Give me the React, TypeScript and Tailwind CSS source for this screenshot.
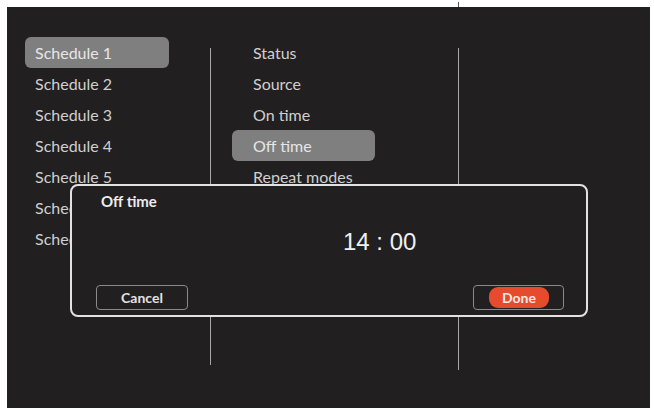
const SCHEDULES = ["Schedule 1", "Schedule 2", "Schedule 3", "Schedule 4", "Schedule 5", "Schedule 6", "Schedule 7"];
const SETTINGS = ["Status", "Source", "On time", "Off time", "Repeat modes"];

function MenuRow({ label, selected, width, padLeft }: { label: string; selected: boolean; width: string; padLeft: string }) {
  return (
    <div
      className={`${width} ${padLeft} h-[31px] flex items-center rounded-[6px] text-[16px] leading-none ${
        selected ? "bg-[#7f7f7f] text-[#e6e6e6]" : "text-[#cfcfcf]"
      }`}
    >
      {label}
    </div>
  );
}

export default function App() {
  return (
    <div className="relative w-[654px] h-[410px] bg-white pl-[7px] pt-[7px]" style={{ fontFamily: "Lato, 'Open Sans', sans-serif" }}>
      {/* tick above the right divider */}
      <div className="absolute left-[458px] top-[2px] w-px h-[5px] bg-[#555]" />

      <div className="relative w-[643px] h-[401px] bg-[#221f20] flex">
        {/* schedules */}
        <div className="w-[203px] pt-[30px] pl-[18px] flex flex-col">
          {SCHEDULES.map((s, i) => (
            <MenuRow key={s} label={s} selected={i === 0} width="w-[144px]" padLeft="pl-[10px]" />
          ))}
        </div>
        <div className="w-px mt-[41px] h-[317px] bg-[#a8a8a8]" />

        {/* settings */}
        <div className="w-[247px] pt-[30px] pl-[21px] flex flex-col">
          {SETTINGS.map((s) => (
            <MenuRow key={s} label={s} selected={s === "Off time"} width="w-[143px]" padLeft="pl-[21px]" />
          ))}
        </div>
        <div className="w-px mt-[41px] h-[322px] bg-[#a8a8a8]" />
        <div className="flex-1" />

        {/* dialog */}
        <div className="absolute left-[63px] top-[177px] w-[518px] h-[133px] border-2 border-[#e2e2e2] rounded-[8px] bg-[#221f20] flex flex-col">
          <div className="pl-[29px] pt-[5px] h-[25px] leading-[20px] text-[15px] font-bold text-[#ececec]">Off time</div>
          <div
            className="mt-[16px] h-[30px] pl-[271px] flex items-center text-[24px] text-[#f0f0f0]"
            style={{ fontFamily: "'Liberation Sans', Arial, sans-serif" }}
          >
            14 : 00
          </div>
          <div className="mt-[28px] pl-[24px] pr-[22px] flex justify-between">
            <div className="w-[92px] h-[25px] border-[1.5px] border-[#8a8a8a] rounded-[4px] flex items-center justify-center text-[14px] font-bold text-[#e2e2e2]">
              Cancel
            </div>
            <div className="w-[91px] h-[25px] border-[1.5px] border-[#8a8a8a] rounded-[4px] flex items-center pl-[15px]">
              <div className="w-[60px] h-[21px] rounded-[9px] bg-[#e64b2e] flex items-center justify-center text-[14px] font-bold text-[#fbe9e4]">
                Done
              </div>
            </div>
          </div>
        </div>
      </div>
    </div>
  );
}
